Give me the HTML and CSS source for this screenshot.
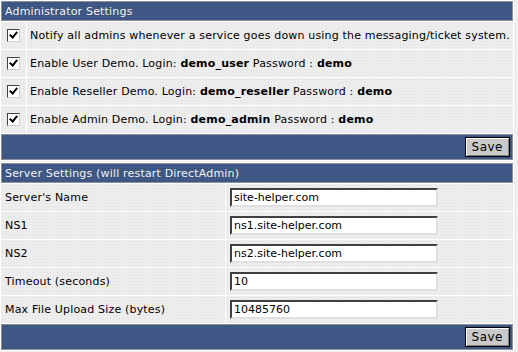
FILE: index.html
```html
<!DOCTYPE html>
<html lang="en">
<head>
  <meta charset="UTF-8">
  <title>Administrator Settings</title>
  <link rel="stylesheet" href="styles.css">
</head>
<body>
  <form class="settings">
    <table class="list">
      <tr><td class="list-title" colspan="2">Administrator Settings</td></tr>
      <tr>
        <td class="check"><span class="box"></span></td>
        <td class="item">Notify all admins whenever a service goes down using the messaging/ticket system.</td>
      </tr>
      <tr>
        <td class="check"><span class="box"></span></td>
        <td class="item">Enable User Demo. Login: <b>demo_user</b> Password : <b>demo</b></td>
      </tr>
      <tr>
        <td class="check"><span class="box"></span></td>
        <td class="item">Enable Reseller Demo. Login: <b>demo_reseller</b> Password : <b>demo</b></td>
      </tr>
      <tr>
        <td class="check"><span class="box"></span></td>
        <td class="item">Enable Admin Demo. Login: <b>demo_admin</b> Password : <b>demo</b></td>
      </tr>
      <tr><td class="list-bar" colspan="2"><button type="button" class="save">Save</button></td></tr>
    </table>

    <table class="list">
      <tr><td class="list-title" colspan="2">Server Settings (will restart DirectAdmin)</td></tr>
      <tr>
        <td class="label">Server's Name</td>
        <td class="field"><input type="text" value="site-helper.com"></td>
      </tr>
      <tr>
        <td class="label">NS1</td>
        <td class="field"><input type="text" value="ns1.site-helper.com"></td>
      </tr>
      <tr>
        <td class="label">NS2</td>
        <td class="field"><input type="text" value="ns2.site-helper.com"></td>
      </tr>
      <tr>
        <td class="label">Timeout (seconds)</td>
        <td class="field"><input type="text" value="10"></td>
      </tr>
      <tr>
        <td class="label">Max File Upload Size (bytes)</td>
        <td class="field"><input type="text" value="10485760"></td>
      </tr>
      <tr><td class="list-bar" colspan="2"><button type="button" class="save">Save</button></td></tr>
    </table>
  </form>
</body>
</html>
```

FILE: styles.css
```css
:root {
  --bar: #3f5885;
  --cell: #ededed;
  --text: #000;
}

* {
  box-sizing: border-box;
}

body {
  margin: 0;
  background: #efefef;
  font-family: 'DejaVu Sans', Verdana, sans-serif;
  font-size: 11px;
  letter-spacing: 0.18px;
  color: var(--text);
}

.list {
  width: 514px;
  border-collapse: separate;
  border-spacing: 1px;
  background: #fff;
  margin-bottom: 1px;
}

.list td {
  background-color: var(--cell);
  background-image: radial-gradient(circle, rgba(0, 0, 0, 0.05) 0.7px, transparent 0.8px);
  background-size: 3px 3px;
  padding: 0 4px;
  height: 27px;
}

.list .list-title {
  background-color: var(--bar);
  background-image: radial-gradient(circle, rgba(0, 0, 0, 0.12) 0.7px, transparent 0.8px);
  color: #f2f2f2;
  border: 1px solid #8a8f98;
  height: 20px;
  padding: 0 3px;
}

.list .list-bar {
  background-color: var(--bar);
  background-image: radial-gradient(circle, rgba(0, 0, 0, 0.12) 0.7px, transparent 0.8px);
  border: 1px solid #8a8f98;
  height: 26px;
  text-align: right;
  padding: 0 2px;
}

.check {
  width: 25px;
  text-align: center;
}

.list .item {
  white-space: nowrap;
  padding: 0 0 0 3px;
}

.box {
  display: inline-block;
  width: 13px;
  height: 13px;
  vertical-align: middle;
  background: #fff;
  border: 1px solid;
  border-color: #404040 #d4d0c8 #d4d0c8 #404040;
  position: relative;
}

.box::after {
  content: '';
  position: absolute;
  left: 3px;
  top: 0;
  width: 3px;
  height: 6px;
  border: solid #000;
  border-width: 0 2px 2px 0;
  transform: rotate(40deg);
}

.label {
  width: 224px;
}

.field input {
  width: 208px;
  height: 19px;
  padding: 0 2px;
  border: 2px solid;
  border-color: #404040 #e0e0e0 #e0e0e0 #404040;
  font-family: 'DejaVu Sans', Verdana, sans-serif;
  font-size: 11px;
  background: #fff;
}

.save {
  font-family: 'DejaVu Sans', Verdana, sans-serif;
  font-size: 12px;
  letter-spacing: 0.5px;
  background: #c9c9c9;
  border: 1px solid #000;
  box-shadow: inset 1px 1px 0 #fff, inset -1px -1px 0 #808080;
  padding: 1px 6px;
  height: 20px;
  vertical-align: middle;
}
```
